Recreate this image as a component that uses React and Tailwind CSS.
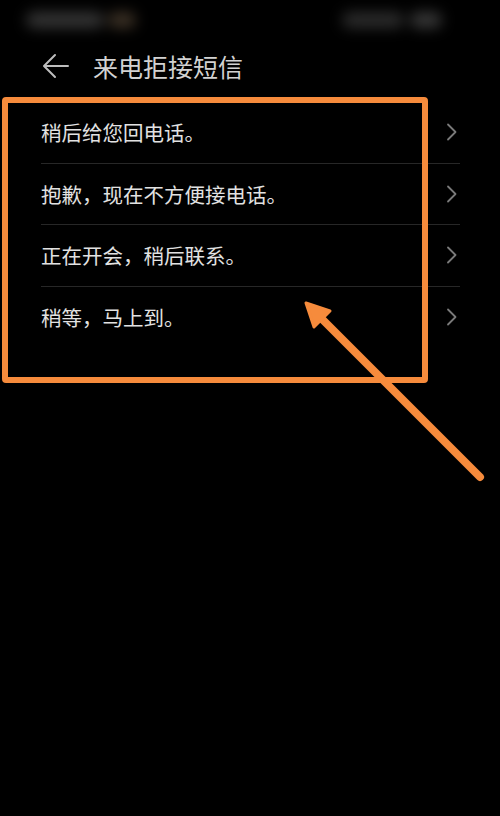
import React from "react";

const items = ["稍后给您回电话。", "抱歉，现在不方便接电话。", "正在开会，稍后联系。", "稍等，马上到。"];

function Chevron() {
  return (
    <svg width="12" height="18" viewBox="0 0 12 18" fill="none">
      <path d="M2 1.5 L9.5 9 L2 16.5" stroke="#7a7a7a" strokeWidth="1.8" strokeLinecap="round" strokeLinejoin="round" />
    </svg>
  );
}

export default function App() {
  return (
    <div
      className="relative w-[500px] h-[816px] bg-black overflow-hidden"
      style={{ fontFamily: '"Noto Sans CJK SC", "Noto Sans", sans-serif' }}
    >
      {/* status bar (blurred) */}
      <div className="h-[40px] flex items-center justify-between pl-[26px] pr-[58px]">
        <div className="flex items-center gap-[4px] blur-[7px]">
          <div className="w-[78px] h-[16px] rounded-full bg-[#353535]" />
          <div className="w-[28px] h-[16px] rounded-full bg-[#3d3226]" />
        </div>
        <div className="flex items-center gap-[6px] blur-[7px]">
          <div className="w-[62px] h-[16px] rounded-full bg-[#2c2c2c]" />
          <div className="w-[32px] h-[16px] rounded-full bg-[#383838]" />
        </div>
      </div>

      {/* header */}
      <div className="h-[52px] flex items-center pl-[42px]">
        <svg width="28" height="26" viewBox="0 0 28 26" fill="none">
          <path d="M26 13 H2.5 M13 2 L2 13 L13 24" stroke="#bdbdbd" strokeWidth="2" strokeLinecap="round" strokeLinejoin="round" />
        </svg>
        <div className="ml-[23px] text-[25px] leading-none text-[#d2d2d2]">来电拒接短信</div>
      </div>

      {/* list */}
      <div className="mt-[10px] ml-[41px] mr-[40px]">
        {items.map((t, i) => (
          <div
            key={i}
            className={
              "h-[61.5px] flex items-center justify-between pr-[2px] " +
              (i < items.length - 1 ? "border-b border-[#272727]" : "")
            }
          >
            <span className="text-[20.5px] leading-none text-[#e2e2e2]">{t}</span>
            <Chevron />
          </div>
        ))}
      </div>

      {/* annotation box */}
      <div className="absolute left-[2px] top-[97px] w-[426px] h-[286px] border-[6px] border-[#f68b3c] rounded-[4px]" />

      {/* annotation arrow */}
      <svg className="absolute left-0 top-0" width="500" height="816" viewBox="0 0 500 816" fill="none">
        <line x1="480" y1="477" x2="318" y2="315" stroke="#f68b3c" strokeWidth="8" strokeLinecap="round" />
        <path d="M306 303 L330 311 L314 327 Z" fill="#f68b3c" stroke="#f68b3c" strokeWidth="3" strokeLinejoin="round" />
      </svg>
    </div>
  );
}
